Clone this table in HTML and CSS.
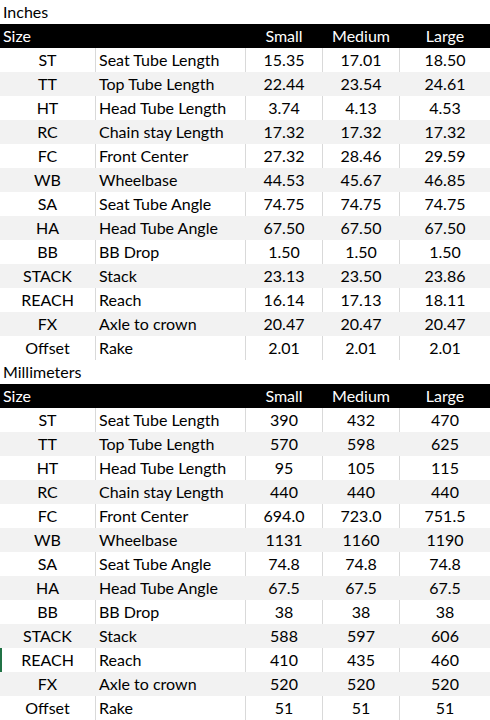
FILE: index.html
```html
<!DOCTYPE html>
<html>
<head>
<meta charset="utf-8">
<link rel="stylesheet" href="styles.css">
</head>
<body>
<div class="sheet">
  <div class="title">Inches</div>
  <div class="row head"><div class="c1">Size</div><div class="c2"></div><div class="n">Small</div><div class="n">Medium</div><div class="n last">Large</div></div>
  <div class="row"><div class="c1">ST</div><div class="c2">Seat Tube Length</div><div class="n">15.35</div><div class="n">17.01</div><div class="n last">18.50</div></div>
  <div class="row alt"><div class="c1">TT</div><div class="c2">Top Tube Length</div><div class="n">22.44</div><div class="n">23.54</div><div class="n last">24.61</div></div>
  <div class="row"><div class="c1">HT</div><div class="c2">Head Tube Length</div><div class="n">3.74</div><div class="n">4.13</div><div class="n last">4.53</div></div>
  <div class="row alt"><div class="c1">RC</div><div class="c2">Chain stay Length</div><div class="n">17.32</div><div class="n">17.32</div><div class="n last">17.32</div></div>
  <div class="row"><div class="c1">FC</div><div class="c2">Front Center</div><div class="n">27.32</div><div class="n">28.46</div><div class="n last">29.59</div></div>
  <div class="row alt"><div class="c1">WB</div><div class="c2">Wheelbase</div><div class="n">44.53</div><div class="n">45.67</div><div class="n last">46.85</div></div>
  <div class="row"><div class="c1">SA</div><div class="c2">Seat Tube Angle</div><div class="n">74.75</div><div class="n">74.75</div><div class="n last">74.75</div></div>
  <div class="row alt"><div class="c1">HA</div><div class="c2">Head Tube Angle</div><div class="n">67.50</div><div class="n">67.50</div><div class="n last">67.50</div></div>
  <div class="row"><div class="c1">BB</div><div class="c2">BB Drop</div><div class="n">1.50</div><div class="n">1.50</div><div class="n last">1.50</div></div>
  <div class="row alt"><div class="c1">STACK</div><div class="c2">Stack</div><div class="n">23.13</div><div class="n">23.50</div><div class="n last">23.86</div></div>
  <div class="row"><div class="c1">REACH</div><div class="c2">Reach</div><div class="n">16.14</div><div class="n">17.13</div><div class="n last">18.11</div></div>
  <div class="row alt"><div class="c1">FX</div><div class="c2">Axle to crown</div><div class="n">20.47</div><div class="n">20.47</div><div class="n last">20.47</div></div>
  <div class="row"><div class="c1">Offset</div><div class="c2">Rake</div><div class="n">2.01</div><div class="n">2.01</div><div class="n last">2.01</div></div>

  <div class="title">Millimeters</div>
  <div class="row head"><div class="c1">Size</div><div class="c2"></div><div class="n">Small</div><div class="n">Medium</div><div class="n last">Large</div></div>
  <div class="row"><div class="c1">ST</div><div class="c2">Seat Tube Length</div><div class="n">390</div><div class="n">432</div><div class="n last">470</div></div>
  <div class="row alt"><div class="c1">TT</div><div class="c2">Top Tube Length</div><div class="n">570</div><div class="n">598</div><div class="n last">625</div></div>
  <div class="row"><div class="c1">HT</div><div class="c2">Head Tube Length</div><div class="n">95</div><div class="n">105</div><div class="n last">115</div></div>
  <div class="row alt"><div class="c1">RC</div><div class="c2">Chain stay Length</div><div class="n">440</div><div class="n">440</div><div class="n last">440</div></div>
  <div class="row"><div class="c1">FC</div><div class="c2">Front Center</div><div class="n">694.0</div><div class="n">723.0</div><div class="n last">751.5</div></div>
  <div class="row alt"><div class="c1">WB</div><div class="c2">Wheelbase</div><div class="n">1131</div><div class="n">1160</div><div class="n last">1190</div></div>
  <div class="row"><div class="c1">SA</div><div class="c2">Seat Tube Angle</div><div class="n">74.8</div><div class="n">74.8</div><div class="n last">74.8</div></div>
  <div class="row alt"><div class="c1">HA</div><div class="c2">Head Tube Angle</div><div class="n">67.5</div><div class="n">67.5</div><div class="n last">67.5</div></div>
  <div class="row"><div class="c1">BB</div><div class="c2">BB Drop</div><div class="n">38</div><div class="n">38</div><div class="n last">38</div></div>
  <div class="row alt"><div class="c1">STACK</div><div class="c2">Stack</div><div class="n">588</div><div class="n">597</div><div class="n last">606</div></div>
  <div class="row selected"><div class="c1">REACH</div><div class="c2">Reach</div><div class="n">410</div><div class="n">435</div><div class="n last">460</div></div>
  <div class="row alt"><div class="c1">FX</div><div class="c2">Axle to crown</div><div class="n">520</div><div class="n">520</div><div class="n last">520</div></div>
  <div class="row"><div class="c1">Offset</div><div class="c2">Rake</div><div class="n">51</div><div class="n">51</div><div class="n last">51</div></div>
</div>
</body>
</html>
```

FILE: styles.css
```css
html, body {
  margin: 0;
  padding: 0;
  background: #ffffff;
}

.sheet {
  width: 490px;
  font-family: Lato, "Open Sans", "Liberation Sans", sans-serif;
  font-size: 16px;
  color: #000000;
}

.title {
  height: 24px;
  line-height: 24px;
  padding-left: 3px;
  background: #ffffff;
}

.row {
  display: grid;
  grid-template-columns: 96px 150px 77px 77px 90px;
  height: 24px;
  line-height: 24px;
  background: #ffffff;
}

.row > div {
  border-right: 1px solid #d9d9d9;
  white-space: nowrap;
  overflow: hidden;
}

.row > .last {
  border-right: none;
}

.row.alt {
  background: #f2f2f2;
}

.row.alt > div {
  border-right-color: #f2f2f2;
}

.row.head {
  background: #000000;
  color: #ffffff;
}

.row.head > div {
  border-right-color: #000000;
}

.row.head .c1 {
  text-align: left;
  padding-left: 3px;
}

.c1 {
  text-align: center;
}

.c2 {
  padding-left: 3px;
}

.n {
  text-align: center;
}

.row.selected {
  box-shadow: inset 2px 0 0 #217346;
}
```
